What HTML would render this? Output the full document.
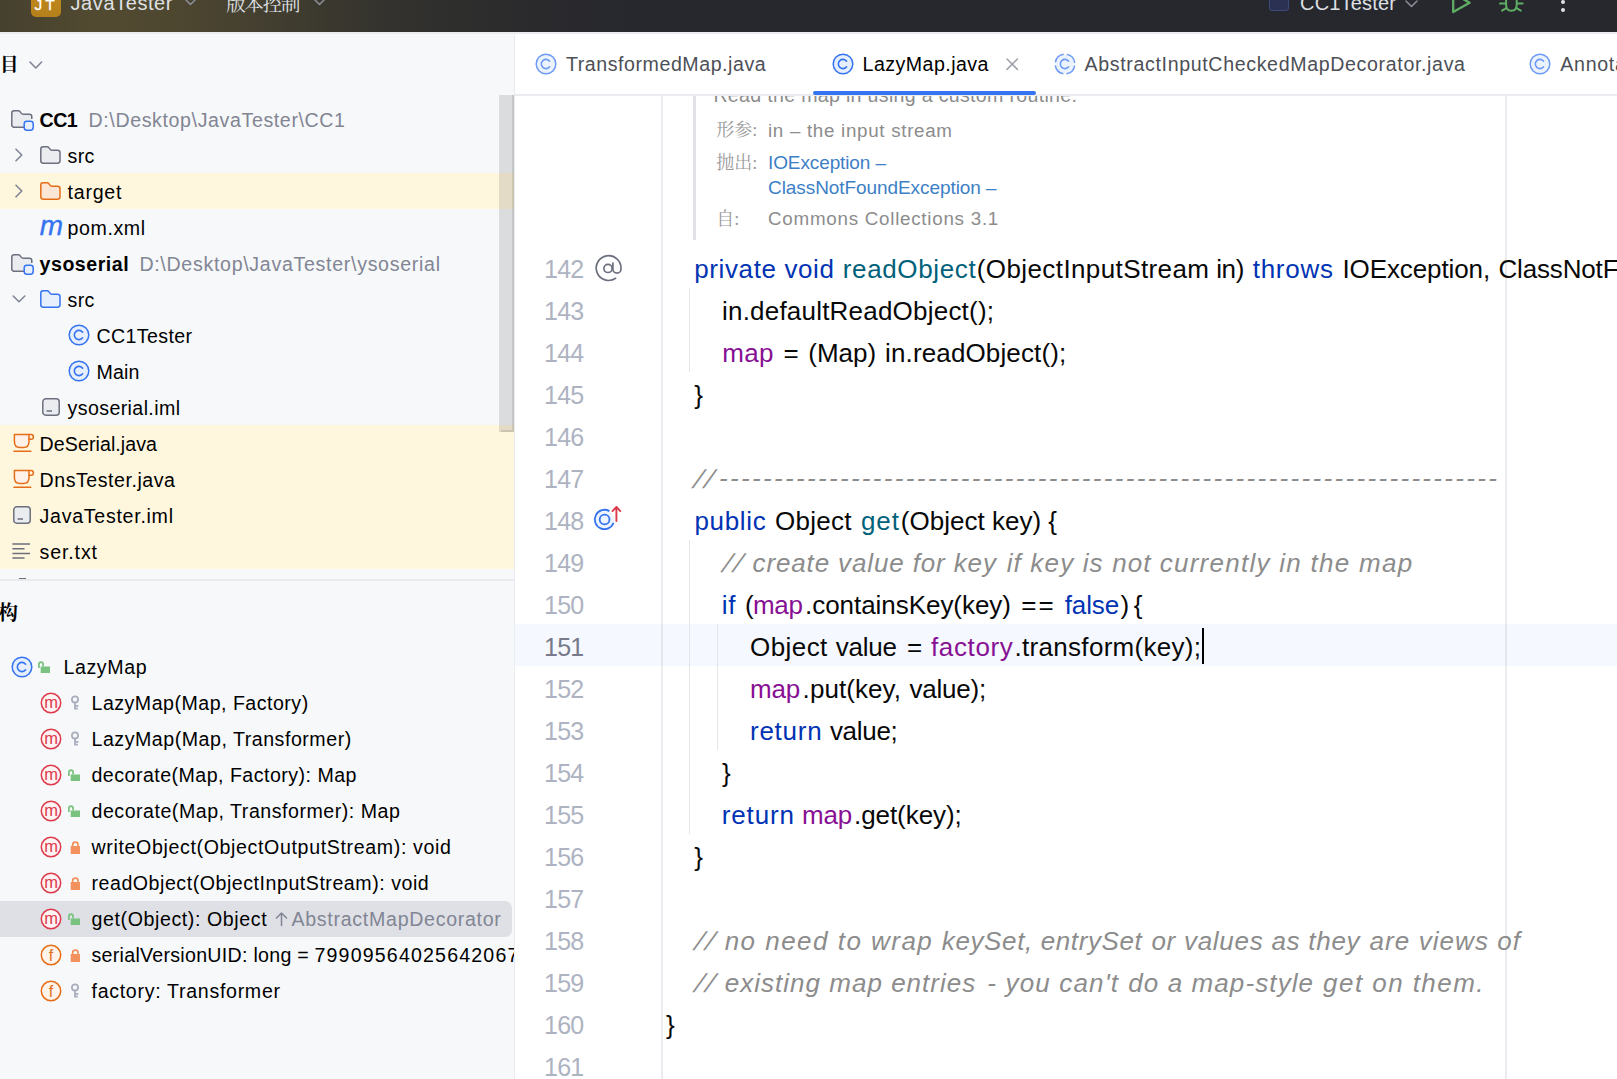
<!DOCTYPE html>
<html lang="zh">
<head>
<meta charset="utf-8">
<title>JavaTester – LazyMap.java</title>
<style>
html,body{margin:0;padding:0;}
body{width:1617px;height:1079px;overflow:hidden;position:relative;background:#fff;font-family:"Liberation Sans","Noto Sans CJK SC",sans-serif;color:#000;}
.abs{position:absolute;}
.t{position:absolute;white-space:pre;line-height:1;}
/* title bar */
#titlebar{left:0;top:0;width:1617px;height:32px;background:#27282e;overflow:hidden;}
#titleglow{left:0;top:0;width:700px;height:32px;background:linear-gradient(90deg,#46412f 0px,#524a30 100px,#4e4730 170px,#454030 250px,#3a382e 330px,#33322e 390px,#2e2e2d 460px,#2a2a2d 540px,#27282e 640px);}
#titleline{left:0;top:32px;width:1617px;height:2px;background:#ebecf0;}
.tb{color:#dfe1e5;font-size:20px;}
.cjks{font-family:"Liberation Serif","Noto Serif CJK SC",serif;}
/* left panel */
#left{left:0;top:34px;width:514px;height:1045px;background:#f7f8fa;}
#leftborder{left:514px;top:34px;width:1.2px;height:1045px;background:#ebecf0;}
.hl{background:#fef5dc;left:0;width:514px;}
.row{font-size:20px;color:#000;}
.gray{color:#818594;}
/* editor */
#tabline{left:515px;top:94px;width:1102px;height:1.5px;background:#ebecf0;}
.tab{font-size:20px;color:#4d4f57;}
.code{font-size:25px;color:#080808;}
.ln{font-size:25px;color:#aeb3c2;left:544px;}
.kw{color:#0033b3;}
.fn{color:#00627a;}
.fd{color:#871094;}
.cm{color:#8c8c8c;font-style:italic;}
.doc{font-size:19.5px;color:#8c8c8c;}
.lnk{color:#3d7fc6;}
</style>
</head>
<body>
<div id="titlebar" class="abs"><div id="titleglow" class="abs"></div>
<div class="abs" style="left:31px;top:-14px;width:30px;height:31px;border-radius:5px;background:linear-gradient(180deg,#c48a1a,#b5801c);"></div>
<div id="t1" class="t tb" style="left:34.6px;top:-3.1px;font-size:15.5px;letter-spacing:2.979px;color:#fff;-webkit-text-stroke:0.25px #fff;">JT</div>
<div id="t2" class="t tb" style="left:70.5px;top:-6.9px;font-size:20px;letter-spacing:0.586px;">JavaTester</div>
<svg class="abs" style="left:183.6px;top:-2px;" width="13" height="7.5" viewBox="0 0 13 7.5"><path d="M1 1 L6.5 6.5 L12 1" fill="none" stroke="#8a8d99" stroke-width="1.5" stroke-linecap="round" stroke-linejoin="round"/></svg>
<div id="t3" class="t tb cjks" style="left:226.3px;top:-5.1px;font-size:19.5px;letter-spacing:-1.269px;">版本控制</div>
<svg class="abs" style="left:312.5px;top:-2px;" width="13" height="7.5" viewBox="0 0 13 7.5"><path d="M1 1 L6.5 6.5 L12 1" fill="none" stroke="#8a8d99" stroke-width="1.5" stroke-linecap="round" stroke-linejoin="round"/></svg>
<div class="abs" style="left:1268.6px;top:-9.6px;width:18.2px;height:18.2px;border:1.5px solid #3d4b7c;border-radius:3px;background:#2a3152;"></div>
<div id="t4" class="t tb" style="left:1300.0px;top:-6.9px;font-size:20px;letter-spacing:0.189px;">CC1Tester</div>
<svg class="abs" style="left:1404.8px;top:0px;" width="13" height="7.5" viewBox="0 0 13 7.5"><path d="M1 1 L6.5 6.5 L12 1" fill="none" stroke="#8a8d99" stroke-width="1.5" stroke-linecap="round" stroke-linejoin="round"/></svg>
<svg class="abs" style="left:1440px;top:-9.2px;" width="40" height="30" viewBox="0 0 40 30"><path d="M13.2 2.4 L29.6 11.7 L13.2 21 Z" fill="none" stroke="#5fad65" stroke-width="2.3" stroke-linejoin="round"/></svg>
<svg class="abs" style="left:1490px;top:-10px;" width="40" height="30" viewBox="0 0 40 30"><g fill="none" stroke="#5fad65" stroke-width="2" stroke-linecap="round"><path d="M16.1 4 L16.1 15 Q16.1 20.7 21.4 20.7 Q26.7 20.7 26.7 15 L26.7 4"/><path d="M15.4 13.6 L10 13.6 M27.4 13.6 L32.6 13.6 M16.2 18.2 L12 20.6 M26.6 18.2 L30.8 20.6"/></g></svg>
<div class="abs" style="left:1560.5px;top:0px;width:4px;height:4px;border-radius:2px;background:#dfe1e5;"></div>
<div class="abs" style="left:1560.5px;top:8.2px;width:4px;height:4px;border-radius:2px;background:#dfe1e5;"></div>
</div>
<div id="titleline" class="abs"></div>
<div id="left" class="abs"></div>
<div id="t5" class="t cjks" style="left:-0.1px;top:55.7px;font-size:18.5px;font-weight:bold;color:#000;">目</div>
<svg class="abs" style="left:29.2px;top:61px;" width="13.6" height="8" viewBox="0 0 13.6 8"><path d="M1 1 L6.8 7 L12.6 1" fill="none" stroke="#818594" stroke-width="1.6" stroke-linecap="round" stroke-linejoin="round"/></svg>
<div class="abs" style="left:0px;top:173px;width:514px;height:36px;background:#fff6de;"></div>
<div class="abs" style="left:0px;top:425px;width:514px;height:144px;background:#fff6de;"></div>
<svg class="abs" style="left:10.4px;top:108px;" width="26" height="24" viewBox="0 0 26 24"><path d="M14 19.2 L4.2 19.2 Q1.8 19.2 1.8 16.8 L1.8 5.2 Q1.8 2.8 4.2 2.8 L8.4 2.8 Q9.4 2.8 10 3.6 L11.4 5.4 Q12 6.2 13 6.2 L19.4 6.2 Q21.8 6.2 21.8 8.6 L21.8 11" fill="#ebecf0" stroke="#6c707e" stroke-width="1.5" stroke-linejoin="round"/><path d="M14 19.2 L14 11 L21.8 11 Z" fill="#ebecf0" stroke="none"/><rect x="14.2" y="13.2" width="9" height="9" rx="2.6" fill="#e7effd" stroke="#3574f0" stroke-width="1.5"/></svg>
<div id="t6" class="t row" style="left:39.6px;top:110.8px;font-size:19.6px;letter-spacing:-0.600px;font-weight:bold;">CC1</div>
<div id="t7" class="t row" style="left:88.5px;top:110.8px;font-size:19.6px;letter-spacing:0.615px;color:#818594;">D:\Desktop\JavaTester\CC1</div>
<svg class="abs" style="left:12.5px;top:147px;" width="12" height="16" viewBox="0 0 12 16"><path d="M3 2.2 L8.8 8 L3 13.8" fill="none" stroke="#818594" stroke-width="1.6" stroke-linecap="round" stroke-linejoin="round"/></svg>
<svg class="abs" style="left:39.2px;top:144px;" width="24" height="22" viewBox="0 0 24 22"><path d="M1.8 5.2 Q1.8 2.8 4.2 2.8 L8.2 2.8 Q9.2 2.8 9.8 3.6 L11.1 5.4 Q11.7 6.2 12.7 6.2 L18.6 6.2 Q21 6.2 21 8.6 L21 16.8 Q21 19.2 18.6 19.2 L4.2 19.2 Q1.8 19.2 1.8 16.8 Z" fill="#ebecf0" stroke="#6c707e" stroke-width="1.5" stroke-linejoin="round"/></svg>
<div id="t8" class="t row" style="left:67.6px;top:146.8px;font-size:19.6px;letter-spacing:0.285px;">src</div>
<svg class="abs" style="left:12.5px;top:183px;" width="12" height="16" viewBox="0 0 12 16"><path d="M3 2.2 L8.8 8 L3 13.8" fill="none" stroke="#818594" stroke-width="1.6" stroke-linecap="round" stroke-linejoin="round"/></svg>
<svg class="abs" style="left:39.2px;top:180px;" width="24" height="22" viewBox="0 0 24 22"><path d="M1.8 5.2 Q1.8 2.8 4.2 2.8 L8.2 2.8 Q9.2 2.8 9.8 3.6 L11.1 5.4 Q11.7 6.2 12.7 6.2 L18.6 6.2 Q21 6.2 21 8.6 L21 16.8 Q21 19.2 18.6 19.2 L4.2 19.2 Q1.8 19.2 1.8 16.8 Z" fill="#fce6d6" stroke="#e66d17" stroke-width="1.5" stroke-linejoin="round"/></svg>
<div id="t9" class="t row" style="left:67.6px;top:182.8px;font-size:19.6px;letter-spacing:0.738px;">target</div>
<div id="t10" class="t " style="left:39.8px;top:211.6px;font-size:28px;-webkit-text-stroke:0.35px #3574f0;font-style:italic;color:#3574f0;font-family:'Liberation Sans',sans-serif;letter-spacing:0;">m</div>
<div id="t11" class="t row" style="left:67.6px;top:218.8px;font-size:19.6px;letter-spacing:0.561px;">pom.xml</div>
<svg class="abs" style="left:10.4px;top:252px;" width="26" height="24" viewBox="0 0 26 24"><path d="M14 19.2 L4.2 19.2 Q1.8 19.2 1.8 16.8 L1.8 5.2 Q1.8 2.8 4.2 2.8 L8.4 2.8 Q9.4 2.8 10 3.6 L11.4 5.4 Q12 6.2 13 6.2 L19.4 6.2 Q21.8 6.2 21.8 8.6 L21.8 11" fill="#ebecf0" stroke="#6c707e" stroke-width="1.5" stroke-linejoin="round"/><path d="M14 19.2 L14 11 L21.8 11 Z" fill="#ebecf0" stroke="none"/><rect x="14.2" y="13.2" width="9" height="9" rx="2.6" fill="#e7effd" stroke="#3574f0" stroke-width="1.5"/></svg>
<div id="t12" class="t row" style="left:39.6px;top:254.8px;font-size:19.6px;letter-spacing:0.503px;font-weight:bold;">ysoserial</div>
<div id="t13" class="t row" style="left:139.4px;top:254.8px;font-size:19.6px;letter-spacing:0.691px;color:#818594;">D:\Desktop\JavaTester\ysoserial</div>
<svg class="abs" style="left:11px;top:293.3px;" width="16" height="12" viewBox="0 0 16 12"><path d="M2.2 3 L8 8.8 L13.8 3" fill="none" stroke="#818594" stroke-width="1.6" stroke-linecap="round" stroke-linejoin="round"/></svg>
<svg class="abs" style="left:39.2px;top:288px;" width="24" height="22" viewBox="0 0 24 22"><path d="M1.8 5.2 Q1.8 2.8 4.2 2.8 L8.2 2.8 Q9.2 2.8 9.8 3.6 L11.1 5.4 Q11.7 6.2 12.7 6.2 L18.6 6.2 Q21 6.2 21 8.6 L21 16.8 Q21 19.2 18.6 19.2 L4.2 19.2 Q1.8 19.2 1.8 16.8 Z" fill="#e7effd" stroke="#3574f0" stroke-width="1.5" stroke-linejoin="round"/></svg>
<div id="t14" class="t row" style="left:67.6px;top:290.8px;font-size:19.6px;letter-spacing:0.285px;">src</div>
<svg class="abs" style="left:67.1px;top:322.8px;" width="24" height="24" viewBox="0 0 24 24"><circle cx="12" cy="12" r="9.8" fill="#e7effd"/><circle cx="12" cy="12" r="9.8" fill="none" stroke="#3574f0" stroke-width="1.5"/><path d="M15.6 9.2 A4.6 4.6 0 1 0 15.6 14.8" fill="none" stroke="#3574f0" stroke-width="1.6" stroke-linecap="round"/></svg>
<div id="t15" class="t row" style="left:96.5px;top:326.8px;font-size:19.6px;letter-spacing:0.367px;">CC1Tester</div>
<svg class="abs" style="left:67.1px;top:358.8px;" width="24" height="24" viewBox="0 0 24 24"><circle cx="12" cy="12" r="9.8" fill="#e7effd"/><circle cx="12" cy="12" r="9.8" fill="none" stroke="#3574f0" stroke-width="1.5"/><path d="M15.6 9.2 A4.6 4.6 0 1 0 15.6 14.8" fill="none" stroke="#3574f0" stroke-width="1.6" stroke-linecap="round"/></svg>
<div id="t16" class="t row" style="left:96.5px;top:362.8px;font-size:19.6px;letter-spacing:0.143px;">Main</div>
<svg class="abs" style="left:40.7px;top:397px;" width="20" height="20" viewBox="0 0 20 20"><rect x="1.8" y="1.8" width="16.4" height="16.4" rx="3" fill="#ebecf0" stroke="#6c707e" stroke-width="1.5"/><path d="M5.6 14 L11 14" stroke="#6c707e" stroke-width="1.5"/></svg>
<div id="t17" class="t row" style="left:67.6px;top:398.8px;font-size:19.6px;letter-spacing:0.384px;">ysoserial.iml</div>
<svg class="abs" style="left:11.7px;top:432px;" width="24" height="22" viewBox="0 0 24 22"><g fill="none" stroke="#e66d17" stroke-width="1.5" stroke-linejoin="round" stroke-linecap="round"><path d="M2.4 2.6 L17 2.6 L17 9.4 Q17 15.4 11.4 15.4 L8 15.4 Q2.4 15.4 2.4 9.4 Z" fill="#fff1e8"/><path d="M17 2.6 L19.2 2.6 Q21.4 2.6 21.4 4.9 Q21.4 7.2 19.2 7.2 L17 7.2"/><path d="M2 19.2 L18.8 19.2"/></g></svg>
<div id="t18" class="t row" style="left:39.6px;top:434.8px;font-size:19.6px;letter-spacing:0.072px;">DeSerial.java</div>
<svg class="abs" style="left:11.7px;top:468px;" width="24" height="22" viewBox="0 0 24 22"><g fill="none" stroke="#e66d17" stroke-width="1.5" stroke-linejoin="round" stroke-linecap="round"><path d="M2.4 2.6 L17 2.6 L17 9.4 Q17 15.4 11.4 15.4 L8 15.4 Q2.4 15.4 2.4 9.4 Z" fill="#fff1e8"/><path d="M17 2.6 L19.2 2.6 Q21.4 2.6 21.4 4.9 Q21.4 7.2 19.2 7.2 L17 7.2"/><path d="M2 19.2 L18.8 19.2"/></g></svg>
<div id="t19" class="t row" style="left:39.6px;top:470.8px;font-size:19.6px;letter-spacing:0.530px;">DnsTester.java</div>
<svg class="abs" style="left:11.7px;top:505px;" width="20" height="20" viewBox="0 0 20 20"><rect x="1.8" y="1.8" width="16.4" height="16.4" rx="3" fill="#ebecf0" stroke="#6c707e" stroke-width="1.5"/><path d="M5.6 14 L11 14" stroke="#6c707e" stroke-width="1.5"/></svg>
<div id="t20" class="t row" style="left:39.6px;top:506.8px;font-size:19.6px;letter-spacing:0.712px;">JavaTester.iml</div>
<svg class="abs" style="left:11.4px;top:542px;" width="20" height="18" viewBox="0 0 20 18"><g stroke="#6c707e" stroke-width="1.5" stroke-linecap="butt"><path d="M1.4 2 L19 2 M1.4 6.7 L13.5 6.7 M1.4 11.4 L19 11.4 M1.4 16 L13.5 16"/></g></svg>
<div id="t21" class="t row" style="left:39.6px;top:542.8px;font-size:19.6px;letter-spacing:0.853px;">ser.txt</div>
<div class="abs" style="left:499.2px;top:95px;width:14.7px;height:336.7px;background:rgba(0,0,0,0.11);"></div>
<div class="abs" style="left:512px;top:95px;width:1.5px;height:336.7px;background:rgba(0,0,0,0.1);"></div>
<div class="abs" style="left:501px;top:430.2px;width:11px;height:1.5px;background:rgba(0,0,0,0.1);"></div>
<div class="abs" style="left:0px;top:579px;width:514px;height:2px;background:#e9eaee;"></div>
<div id="leftborder" class="abs"></div>
<div class="abs" style="left:19.2px;top:577.8px;width:7px;height:1.3px;background:#6c707e;"></div>
<div id="t22" class="t cjks" style="left:-2.0px;top:602.8px;font-size:20px;font-weight:bold;color:#000;">构</div>
<div class="abs" style="left:-8px;top:900.6px;width:520.2px;height:36px;border-radius:7px;background:#dfe0e5;"></div>
<svg class="abs" style="left:10px;top:654.9px;" width="24" height="24" viewBox="0 0 24 24"><circle cx="12" cy="12" r="9.8" fill="#e7effd"/><circle cx="12" cy="12" r="9.8" fill="none" stroke="#3574f0" stroke-width="1.5"/><path d="M15.6 9.2 A4.6 4.6 0 1 0 15.6 14.8" fill="none" stroke="#3574f0" stroke-width="1.6" stroke-linecap="round"/></svg>
<svg class="abs" style="left:37.1px;top:658px;" width="16" height="18" viewBox="0 0 16 18"><path d="M3.7 4.5 L13 4.5 L13 11 L3.7 11 Z" transform="translate(0,4)" fill="#7ac27f"/><path d="M1.9 10 L1.9 6.6 Q1.9 4.2 4 4.2 Q6.1 4.2 6.1 6.6 L6.1 8.5" fill="none" stroke="#7ac27f" stroke-width="1.7"/></svg>
<div id="t23" class="t row" style="left:63.4px;top:657.9px;font-size:19.6px;letter-spacing:0.614px;">LazyMap</div>
<svg class="abs" style="left:39px;top:691px;" width="24" height="24" viewBox="0 0 24 24"><circle cx="12" cy="12" r="9.7" fill="#fff2f3" stroke="#db3b4b" stroke-width="1.5"/><text x="12" y="16.9" text-anchor="middle" font-family="Liberation Sans, sans-serif" font-size="16.5" fill="#db3b4b">m</text></svg>
<svg class="abs" style="left:66.8px;top:694px;" width="16" height="18" viewBox="0 0 16 18"><circle cx="8" cy="5.4" r="3.1" fill="none" stroke="#a8adbd" stroke-width="1.8"/><path d="M8 8.5 L8 15.6 M8 11.8 L11.4 11.8 M8 14.7 L10.8 14.7" fill="none" stroke="#a8adbd" stroke-width="1.8"/></svg>
<div id="t24" class="t row" style="left:91.5px;top:693.9px;font-size:19.6px;letter-spacing:0.490px;">LazyMap(Map, Factory)</div>
<svg class="abs" style="left:39px;top:727px;" width="24" height="24" viewBox="0 0 24 24"><circle cx="12" cy="12" r="9.7" fill="#fff2f3" stroke="#db3b4b" stroke-width="1.5"/><text x="12" y="16.9" text-anchor="middle" font-family="Liberation Sans, sans-serif" font-size="16.5" fill="#db3b4b">m</text></svg>
<svg class="abs" style="left:66.8px;top:730px;" width="16" height="18" viewBox="0 0 16 18"><circle cx="8" cy="5.4" r="3.1" fill="none" stroke="#a8adbd" stroke-width="1.8"/><path d="M8 8.5 L8 15.6 M8 11.8 L11.4 11.8 M8 14.7 L10.8 14.7" fill="none" stroke="#a8adbd" stroke-width="1.8"/></svg>
<div id="t25" class="t row" style="left:91.5px;top:729.9px;font-size:19.6px;letter-spacing:0.522px;">LazyMap(Map, Transformer)</div>
<svg class="abs" style="left:39px;top:763px;" width="24" height="24" viewBox="0 0 24 24"><circle cx="12" cy="12" r="9.7" fill="#fff2f3" stroke="#db3b4b" stroke-width="1.5"/><text x="12" y="16.9" text-anchor="middle" font-family="Liberation Sans, sans-serif" font-size="16.5" fill="#db3b4b">m</text></svg>
<svg class="abs" style="left:66.8px;top:766px;" width="16" height="18" viewBox="0 0 16 18"><path d="M3.7 4.5 L13 4.5 L13 11 L3.7 11 Z" transform="translate(0,4)" fill="#7ac27f"/><path d="M1.9 10 L1.9 6.6 Q1.9 4.2 4 4.2 Q6.1 4.2 6.1 6.6 L6.1 8.5" fill="none" stroke="#7ac27f" stroke-width="1.7"/></svg>
<div id="t26" class="t row" style="left:91.5px;top:765.9px;font-size:19.6px;letter-spacing:0.475px;">decorate(Map, Factory): Map</div>
<svg class="abs" style="left:39px;top:799px;" width="24" height="24" viewBox="0 0 24 24"><circle cx="12" cy="12" r="9.7" fill="#fff2f3" stroke="#db3b4b" stroke-width="1.5"/><text x="12" y="16.9" text-anchor="middle" font-family="Liberation Sans, sans-serif" font-size="16.5" fill="#db3b4b">m</text></svg>
<svg class="abs" style="left:66.8px;top:802px;" width="16" height="18" viewBox="0 0 16 18"><path d="M3.7 4.5 L13 4.5 L13 11 L3.7 11 Z" transform="translate(0,4)" fill="#7ac27f"/><path d="M1.9 10 L1.9 6.6 Q1.9 4.2 4 4.2 Q6.1 4.2 6.1 6.6 L6.1 8.5" fill="none" stroke="#7ac27f" stroke-width="1.7"/></svg>
<div id="t27" class="t row" style="left:91.5px;top:801.9px;font-size:19.6px;letter-spacing:0.512px;">decorate(Map, Transformer): Map</div>
<svg class="abs" style="left:39px;top:835px;" width="24" height="24" viewBox="0 0 24 24"><circle cx="12" cy="12" r="9.7" fill="#fff2f3" stroke="#db3b4b" stroke-width="1.5"/><text x="12" y="16.9" text-anchor="middle" font-family="Liberation Sans, sans-serif" font-size="16.5" fill="#db3b4b">m</text></svg>
<svg class="abs" style="left:66.8px;top:838px;" width="16" height="18" viewBox="0 0 16 18"><path d="M3.7 8 L13 8 L13 16 L3.7 16 Z" fill="#f2915e"/><path d="M5.7 8.5 L5.7 6.6 Q5.7 4.2 8.35 4.2 Q11 4.2 11 6.6 L11 8.5" fill="none" stroke="#f2915e" stroke-width="1.7"/></svg>
<div id="t28" class="t row" style="left:91.5px;top:837.9px;font-size:19.6px;letter-spacing:0.637px;">writeObject(ObjectOutputStream): void</div>
<svg class="abs" style="left:39px;top:871px;" width="24" height="24" viewBox="0 0 24 24"><circle cx="12" cy="12" r="9.7" fill="#fff2f3" stroke="#db3b4b" stroke-width="1.5"/><text x="12" y="16.9" text-anchor="middle" font-family="Liberation Sans, sans-serif" font-size="16.5" fill="#db3b4b">m</text></svg>
<svg class="abs" style="left:66.8px;top:874px;" width="16" height="18" viewBox="0 0 16 18"><path d="M3.7 8 L13 8 L13 16 L3.7 16 Z" fill="#f2915e"/><path d="M5.7 8.5 L5.7 6.6 Q5.7 4.2 8.35 4.2 Q11 4.2 11 6.6 L11 8.5" fill="none" stroke="#f2915e" stroke-width="1.7"/></svg>
<div id="t29" class="t row" style="left:91.5px;top:873.9px;font-size:19.6px;letter-spacing:0.532px;">readObject(ObjectInputStream): void</div>
<svg class="abs" style="left:39px;top:907px;" width="24" height="24" viewBox="0 0 24 24"><circle cx="12" cy="12" r="9.7" fill="#fff2f3" stroke="#db3b4b" stroke-width="1.5"/><text x="12" y="16.9" text-anchor="middle" font-family="Liberation Sans, sans-serif" font-size="16.5" fill="#db3b4b">m</text></svg>
<svg class="abs" style="left:66.8px;top:910px;" width="16" height="18" viewBox="0 0 16 18"><path d="M3.7 4.5 L13 4.5 L13 11 L3.7 11 Z" transform="translate(0,4)" fill="#7ac27f"/><path d="M1.9 10 L1.9 6.6 Q1.9 4.2 4 4.2 Q6.1 4.2 6.1 6.6 L6.1 8.5" fill="none" stroke="#7ac27f" stroke-width="1.7"/></svg>
<div id="t30" class="t row" style="left:91.5px;top:909.9px;font-size:19.6px;letter-spacing:0.592px;">get(Object): Object</div>
<svg class="abs" style="left:39px;top:943px;" width="24" height="24" viewBox="0 0 24 24"><circle cx="12" cy="12" r="9.7" fill="#fff4eb" stroke="#e66d17" stroke-width="1.5"/><text x="12" y="17.8" text-anchor="middle" font-family="Liberation Sans, sans-serif" font-size="16" fill="#e66d17">f</text></svg>
<svg class="abs" style="left:66.8px;top:946px;" width="16" height="18" viewBox="0 0 16 18"><path d="M3.7 8 L13 8 L13 16 L3.7 16 Z" fill="#f2915e"/><path d="M5.7 8.5 L5.7 6.6 Q5.7 4.2 8.35 4.2 Q11 4.2 11 6.6 L11 8.5" fill="none" stroke="#f2915e" stroke-width="1.7"/></svg>
<div id="t31" class="t row" style="left:91.5px;top:945.9px;font-size:19.6px;letter-spacing:0.284px;">serialVersionUID: long = </div>
<svg class="abs" style="left:39px;top:979px;" width="24" height="24" viewBox="0 0 24 24"><circle cx="12" cy="12" r="9.7" fill="#fff4eb" stroke="#e66d17" stroke-width="1.5"/><text x="12" y="17.8" text-anchor="middle" font-family="Liberation Sans, sans-serif" font-size="16" fill="#e66d17">f</text></svg>
<svg class="abs" style="left:66.8px;top:982px;" width="16" height="18" viewBox="0 0 16 18"><circle cx="8" cy="5.4" r="3.1" fill="none" stroke="#a8adbd" stroke-width="1.8"/><path d="M8 8.5 L8 15.6 M8 11.8 L11.4 11.8 M8 14.7 L10.8 14.7" fill="none" stroke="#a8adbd" stroke-width="1.8"/></svg>
<div id="t32" class="t row" style="left:91.5px;top:981.9px;font-size:19.6px;letter-spacing:0.695px;">factory: Transformer</div>
<svg class="abs" style="left:274px;top:910px;" width="16" height="18" viewBox="0 0 16 18"><path d="M7.5 15.5 L7.5 3 M2.5 8 L7.5 3 L12.5 8" fill="none" stroke="#818594" stroke-width="1.5" stroke-linecap="round" stroke-linejoin="round"/></svg>
<div id="t33" class="t row" style="left:291.5px;top:909.9px;font-size:19.6px;letter-spacing:0.704px;color:#818594;">AbstractMapDecorator</div>
<div class="abs" style="left:314.5px;top:937px;width:199.5px;height:36px;overflow:hidden;">
<div id="t34" class="t row" style="left:0.0px;top:8.9px;font-size:19.6px;letter-spacing:1.164px;">7990956402564206740</div>
</div>
<svg class="abs" style="left:534px;top:52.2px;opacity:0.72;" width="24" height="24" viewBox="0 0 24 24"><circle cx="12" cy="12" r="9.8" fill="#e7effd"/><circle cx="12" cy="12" r="9.8" fill="none" stroke="#3574f0" stroke-width="1.5"/><path d="M15.6 9.2 A4.6 4.6 0 1 0 15.6 14.8" fill="none" stroke="#3574f0" stroke-width="1.6" stroke-linecap="round"/></svg>
<div id="t35" class="t tab" style="left:566.0px;top:55.0px;font-size:19.6px;letter-spacing:0.547px;color:#4d4f57;">TransformedMap.java</div>
<svg class="abs" style="left:830.9px;top:52.2px;" width="24" height="24" viewBox="0 0 24 24"><circle cx="12" cy="12" r="9.8" fill="#e7effd"/><circle cx="12" cy="12" r="9.8" fill="none" stroke="#3574f0" stroke-width="1.5"/><path d="M15.6 9.2 A4.6 4.6 0 1 0 15.6 14.8" fill="none" stroke="#3574f0" stroke-width="1.6" stroke-linecap="round"/></svg>
<div id="t36" class="t tab" style="left:862.6px;top:55.0px;font-size:19.6px;letter-spacing:0.455px;color:#000;">LazyMap.java</div>
<svg class="abs" style="left:1005px;top:57px;" width="14" height="14" viewBox="0 0 14 14"><path d="M2 2 L12.4 12.4 M12.4 2 L2 12.4" stroke="#9da0ab" stroke-width="1.5" stroke-linecap="round"/></svg>
<svg class="abs" style="left:1053.05px;top:51.9px;opacity:0.72;" width="24" height="24" viewBox="0 0 24 24"><circle cx="12" cy="12" r="9.8" fill="#e7effd"/><circle cx="12" cy="12" r="9.8" fill="none" stroke="#3574f0" stroke-width="1.5" stroke-dasharray="12.19 3.20" stroke-dashoffset="-1.60"/><path d="M15.6 9.2 A4.6 4.6 0 1 0 15.6 14.8" fill="none" stroke="#3574f0" stroke-width="1.6" stroke-linecap="round"/></svg>
<div id="t37" class="t tab" style="left:1084.5px;top:55.0px;font-size:19.6px;letter-spacing:0.646px;color:#4d4f57;">AbstractInputCheckedMapDecorator.java</div>
<svg class="abs" style="left:1528.2px;top:51.9px;opacity:0.72;" width="24" height="24" viewBox="0 0 24 24"><circle cx="12" cy="12" r="9.8" fill="#e7effd"/><circle cx="12" cy="12" r="9.8" fill="none" stroke="#3574f0" stroke-width="1.5"/><path d="M15.6 9.2 A4.6 4.6 0 1 0 15.6 14.8" fill="none" stroke="#3574f0" stroke-width="1.6" stroke-linecap="round"/></svg>
<div id="t38" class="t tab" style="left:1560.3px;top:55.0px;font-size:19.6px;letter-spacing:0.692px;color:#4d4f57;">Annotat</div>
<div id="tabline" class="abs"></div>
<div class="abs" style="left:812.6px;top:90.8px;width:223.4px;height:4.6px;border-radius:2.3px;background:#3574f0;"></div>
<div class="abs" style="left:661.3px;top:95.5px;width:1.5px;height:984px;background:#ebecf0;"></div>
<div class="abs" style="left:1505.3px;top:95.5px;width:1.5px;height:984px;background:#ebecf0;"></div>
<div class="abs" style="left:515px;top:624px;width:1102px;height:42px;background:#f5f8fe;"></div>
<div class="abs" style="left:661.3px;top:624px;width:1.5px;height:42px;background:#e4e7f0;"></div>
<div class="abs" style="left:1505.3px;top:624px;width:1.5px;height:42px;background:#e4e7f0;"></div>
<div class="abs" style="left:692.6px;top:95.5px;width:3px;height:144px;background:#e1e2e6;"></div>
<div class="abs" style="left:700px;top:95.5px;width:500px;height:20px;overflow:hidden;">
<div id="t39" class="t doc" style="left:13.4px;top:-10.0px;font-size:19.6px;letter-spacing:0.310px;">Read the map in using a custom routine.</div>
</div>
<div id="t40" class="t doc cjks" style="left:716.3px;top:121.3px;font-size:18px;color:#999;">形参:</div>
<div id="t41" class="t doc" style="left:768.0px;top:121.8px;font-size:18.8px;letter-spacing:0.691px;">in – the input stream</div>
<div id="t42" class="t doc cjks" style="left:716.3px;top:153.5px;font-size:18px;color:#999;">抛出:</div>
<div id="t43" class="t doc lnk" style="left:768.0px;top:153.1px;font-size:19px;letter-spacing:-0.112px;">IOException –</div>
<div id="t44" class="t doc lnk" style="left:768.0px;top:178.2px;font-size:19px;letter-spacing:-0.072px;">ClassNotFoundException –</div>
<div id="t45" class="t doc cjks" style="left:716.3px;top:210.3px;font-size:18px;color:#999;">自:</div>
<div id="t46" class="t doc" style="left:768.0px;top:210.1px;font-size:18.8px;letter-spacing:0.741px;">Commons Collections 3.1</div>
<div id="t47" class="t ln" style="left:544.0px;top:256.7px;font-size:25px;letter-spacing:-0.762px;">142</div>
<div id="t48" class="t ln" style="left:544.0px;top:298.7px;font-size:25px;letter-spacing:-0.762px;">143</div>
<div id="t49" class="t ln" style="left:544.0px;top:340.7px;font-size:25px;letter-spacing:-0.762px;">144</div>
<div id="t50" class="t ln" style="left:544.0px;top:382.7px;font-size:25px;letter-spacing:-0.762px;">145</div>
<div id="t51" class="t ln" style="left:544.0px;top:424.7px;font-size:25px;letter-spacing:-0.762px;">146</div>
<div id="t52" class="t ln" style="left:544.0px;top:466.7px;font-size:25px;letter-spacing:-0.762px;">147</div>
<div id="t53" class="t ln" style="left:544.0px;top:508.7px;font-size:25px;letter-spacing:-0.762px;">148</div>
<div id="t54" class="t ln" style="left:544.0px;top:550.7px;font-size:25px;letter-spacing:-0.762px;">149</div>
<div id="t55" class="t ln" style="left:544.0px;top:592.7px;font-size:25px;letter-spacing:-0.762px;">150</div>
<div id="t56" class="t ln" style="left:544.0px;top:634.7px;font-size:25px;letter-spacing:-0.762px;color:#767a8a;">151</div>
<div id="t57" class="t ln" style="left:544.0px;top:676.7px;font-size:25px;letter-spacing:-0.762px;">152</div>
<div id="t58" class="t ln" style="left:544.0px;top:718.7px;font-size:25px;letter-spacing:-0.762px;">153</div>
<div id="t59" class="t ln" style="left:544.0px;top:760.7px;font-size:25px;letter-spacing:-0.762px;">154</div>
<div id="t60" class="t ln" style="left:544.0px;top:802.7px;font-size:25px;letter-spacing:-0.762px;">155</div>
<div id="t61" class="t ln" style="left:544.0px;top:844.7px;font-size:25px;letter-spacing:-0.762px;">156</div>
<div id="t62" class="t ln" style="left:544.0px;top:886.7px;font-size:25px;letter-spacing:-0.762px;">157</div>
<div id="t63" class="t ln" style="left:544.0px;top:928.7px;font-size:25px;letter-spacing:-0.762px;">158</div>
<div id="t64" class="t ln" style="left:544.0px;top:970.7px;font-size:25px;letter-spacing:-0.762px;">159</div>
<div id="t65" class="t ln" style="left:544.0px;top:1012.7px;font-size:25px;letter-spacing:-0.762px;">160</div>
<div id="t66" class="t ln" style="left:544.0px;top:1054.7px;font-size:25px;letter-spacing:-0.762px;">161</div>
<div id="t67" class="t code" style="left:694.2px;top:255.9px;font-size:26px;letter-spacing:0.621px;"><span class="kw">private void</span></div>
<div id="t68" class="t code" style="left:842.8px;top:255.9px;font-size:26px;letter-spacing:0.634px;"><span class="fn">readObject</span></div>
<div id="t69" class="t code" style="left:976.8px;top:255.9px;font-size:26px;letter-spacing:0.397px;">(ObjectInputStream</div>
<div id="t70" class="t code" style="left:1216.2px;top:255.9px;font-size:26px;letter-spacing:-0.351px;">in)</div>
<div id="t71" class="t code" style="left:1252.7px;top:255.9px;font-size:26px;letter-spacing:0.744px;"><span class="kw">throws</span></div>
<div id="t72" class="t code" style="left:1342.4px;top:255.9px;font-size:26px;letter-spacing:-0.097px;">IOException,</div>
<div id="t73" class="t code" style="left:1498.5px;top:255.9px;font-size:26px;letter-spacing:-0.165px;">ClassNotFoundException {</div>
<div id="t74" class="t code" style="left:722.0px;top:297.9px;font-size:26px;letter-spacing:0.210px;">in.defaultReadObject();</div>
<div id="t75" class="t code" style="left:722.3px;top:339.9px;font-size:26px;letter-spacing:0.309px;"><span class="fd">map</span></div>
<div id="t76" class="t code" style="left:783.6px;top:339.9px;font-size:26px;">=</div>
<div id="t77" class="t code" style="left:808.3px;top:339.9px;font-size:26px;letter-spacing:-0.025px;">(Map)</div>
<div id="t78" class="t code" style="left:885.0px;top:339.9px;font-size:26px;letter-spacing:0.141px;">in.readObject();</div>
<div id="t79" class="t code" style="left:694.2px;top:381.9px;font-size:26px;">}</div>
<div id="t80" class="t code cm" style="left:693.2px;top:465.9px;font-size:26px;letter-spacing:3.7px;transform:skewX(-14deg);transform-origin:0 80%;">//</div>
<div id="t81" class="t code cm" style="left:719.0px;top:464.7px;font-size:26px;letter-spacing:2.332px;">-----------------------------------------------------------------------</div>
<div id="t82" class="t code" style="left:694.5px;top:507.9px;font-size:26px;letter-spacing:0.652px;"><span class="kw">public</span></div>
<div id="t83" class="t code" style="left:775.0px;top:507.9px;font-size:26px;letter-spacing:0.290px;">Object</div>
<div id="t84" class="t code" style="left:860.9px;top:507.9px;font-size:26px;letter-spacing:0.977px;"><span class="fn">get</span></div>
<div id="t85" class="t code" style="left:900.8px;top:507.9px;font-size:26px;letter-spacing:0.010px;">(Object key) {</div>
<div id="t86" class="t code cm" style="left:722.1px;top:549.9px;font-size:26px;letter-spacing:3.7px;transform:skewX(-14deg);transform-origin:0 80%;">//</div>
<div id="t87" class="t code cm" style="left:752.6px;top:549.9px;font-size:26px;letter-spacing:0.863px;">create value for key</div>
<div id="t88" class="t code cm" style="left:1006.7px;top:549.9px;font-size:26px;letter-spacing:1.154px;">if key is not</div>
<div id="t89" class="t code cm" style="left:1159.7px;top:549.9px;font-size:26px;letter-spacing:1.267px;">currently in the map</div>
<div id="t90" class="t code" style="left:721.8px;top:591.9px;font-size:26px;letter-spacing:0.794px;"><span class="kw">if</span></div>
<div id="t91" class="t code" style="left:744.9px;top:591.9px;font-size:26px;">(</div>
<div id="t92" class="t code" style="left:753.0px;top:591.9px;font-size:26px;letter-spacing:-0.296px;"><span class="fd">map</span></div>
<div id="t93" class="t code" style="left:805.0px;top:591.9px;font-size:26px;letter-spacing:-0.041px;">.containsKey(key)</div>
<div id="t94" class="t code" style="left:1021.3px;top:591.9px;font-size:26px;letter-spacing:1.925px;">==</div>
<div id="t95" class="t code" style="left:1064.7px;top:591.9px;font-size:26px;letter-spacing:-0.108px;"><span class="kw">false</span></div>
<div id="t96" class="t code" style="left:1120.5px;top:591.9px;font-size:26px;letter-spacing:-1.340px;">) {</div>
<div id="t97" class="t code" style="left:750.0px;top:633.9px;font-size:26px;letter-spacing:0.429px;">Object</div>
<div id="t98" class="t code" style="left:835.8px;top:633.9px;font-size:26px;letter-spacing:-0.242px;">value</div>
<div id="t99" class="t code" style="left:907.0px;top:633.9px;font-size:26px;">=</div>
<div id="t100" class="t code" style="left:931.0px;top:633.9px;font-size:26px;letter-spacing:0.628px;"><span class="fd">factory</span></div>
<div id="t101" class="t code" style="left:1014.6px;top:633.9px;font-size:26px;letter-spacing:0.291px;">.transform(key);</div>
<div id="t102" class="t code" style="left:750.0px;top:675.9px;font-size:26px;letter-spacing:-0.194px;"><span class="fd">map</span></div>
<div id="t103" class="t code" style="left:802.6px;top:675.9px;font-size:26px;letter-spacing:0.076px;">.put(key,</div>
<div id="t104" class="t code" style="left:909.5px;top:675.9px;font-size:26px;letter-spacing:-0.208px;">value);</div>
<div id="t105" class="t code" style="left:750.0px;top:717.9px;font-size:26px;letter-spacing:0.753px;"><span class="kw">return</span></div>
<div id="t106" class="t code" style="left:829.9px;top:717.9px;font-size:26px;letter-spacing:-0.298px;">value;</div>
<div id="t107" class="t code" style="left:722.0px;top:759.9px;font-size:26px;">}</div>
<div id="t108" class="t code" style="left:721.8px;top:801.9px;font-size:26px;letter-spacing:0.835px;"><span class="kw">return</span></div>
<div id="t109" class="t code" style="left:802.0px;top:801.9px;font-size:26px;letter-spacing:-0.241px;"><span class="fd">map</span></div>
<div id="t110" class="t code" style="left:854.0px;top:801.9px;font-size:26px;letter-spacing:-0.064px;">.get(key);</div>
<div id="t111" class="t code" style="left:694.2px;top:843.9px;font-size:26px;">}</div>
<div id="t112" class="t code cm" style="left:694.3px;top:927.9px;font-size:26px;letter-spacing:3.7px;transform:skewX(-14deg);transform-origin:0 80%;">//</div>
<div id="t113" class="t code cm" style="left:724.7px;top:927.9px;font-size:26px;letter-spacing:1.473px;">no need to wrap</div>
<div id="t114" class="t code cm" style="left:941.8px;top:927.9px;font-size:26px;letter-spacing:0.615px;">keySet, entrySet</div>
<div id="t115" class="t code cm" style="left:1151.4px;top:927.9px;font-size:26px;letter-spacing:0.727px;">or values as they</div>
<div id="t116" class="t code cm" style="left:1369.6px;top:927.9px;font-size:26px;letter-spacing:1.060px;">are views of</div>
<div id="t117" class="t code cm" style="left:694.3px;top:969.9px;font-size:26px;letter-spacing:3.7px;transform:skewX(-14deg);transform-origin:0 80%;">//</div>
<div id="t118" class="t code cm" style="left:724.7px;top:969.9px;font-size:26px;letter-spacing:1.020px;">existing map entries</div>
<div id="t119" class="t code cm" style="left:987.3px;top:969.9px;font-size:26px;letter-spacing:1.166px;">- you can't</div>
<div id="t120" class="t code cm" style="left:1128.2px;top:969.9px;font-size:26px;letter-spacing:1.105px;">do a map-style</div>
<div id="t121" class="t code cm" style="left:1323.1px;top:969.9px;font-size:26px;letter-spacing:1.442px;">get on them.</div>
<div id="t122" class="t code" style="left:666.0px;top:1011.9px;font-size:26px;">}</div>
<div class="abs" style="left:1201.5px;top:628px;width:2.2px;height:36px;background:#000;"></div>
<div class="abs" style="left:688.7px;top:288px;width:1.3px;height:84px;background:#e4e5ea;"></div>
<div class="abs" style="left:688.7px;top:540px;width:1.3px;height:294px;background:#e4e5ea;"></div>
<div class="abs" style="left:716.7px;top:624px;width:1.3px;height:126px;background:#e4e5ea;"></div>
<svg class="abs" style="left:590px;top:249.5px;" width="37" height="37" viewBox="0 0 37 37"><g transform="translate(18.5,18.4)" fill="none" stroke="#6c707e" stroke-width="1.7" stroke-linecap="round"><path d="M7.1 9.9 A12.4 12.4 0 1 1 12.5 0.3 L12.5 0.7 A4.05 4.05 0 0 1 4.4 0.7 L4.4 -5.3"/><circle cx="-0.5" cy="0" r="4.1"/></g></svg>
<svg class="abs" style="left:590px;top:503px;" width="37" height="33" viewBox="0 0 37 33"><g transform="translate(14.5,16.5)" fill="none" stroke-linecap="round" stroke-linejoin="round"><circle cx="0" cy="0" r="9.6" fill="#edf3ff" stroke="none"/><path d="M4.9 -8.4 A9.7 9.7 0 1 0 9.1 3.3" stroke="#3574f0" stroke-width="1.8" stroke-linecap="butt"/><circle cx="0.1" cy="0" r="4.9" fill="#edf3ff" stroke="#3574f0" stroke-width="1.8"/><path d="M11.9 1.6 L11.9 -12.4 M8 -8.4 L11.9 -12.6 L15.8 -8.4" stroke="#db3b4b" stroke-width="1.9"/></g></svg>
</body>
</html>
